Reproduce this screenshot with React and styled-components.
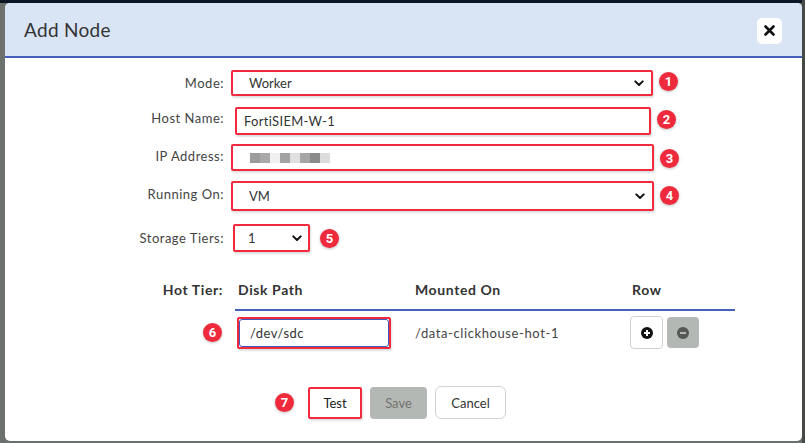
import React from "react";
import styled, { createGlobalStyle } from "styled-components";

const GlobalStyle = createGlobalStyle`
  *, *::before, *::after { box-sizing: border-box; }
  html, body { margin: 0; padding: 0; }
  body { font-family: Lato, "Open Sans", "Liberation Sans", sans-serif; background: #6d716d; }
`;

const Backdrop = styled.div`
  width: 805px;
  height: 443px;
  padding: 3px 3px 2px 5px;
  background:
    linear-gradient(to right, transparent 802px, #464a46 802px),
    linear-gradient(to bottom, #0c1626 0 3px, #6d716d 3px);
`;

const Modal = styled.div`
  width: 797px;
  height: 438px;
  background: #fff;
  border-radius: 5px;
  overflow: hidden;
  display: flex;
  flex-direction: column;
`;

const Header = styled.div`
  height: 55px;
  flex-shrink: 0;
  background: #d9e4f4;
  border-bottom: 2px solid #4561bd;
  display: flex;
  align-items: center;
  justify-content: space-between;
  padding: 0 20px 0 19px;
`;

const Title = styled.h2`
  margin: 0;
  font-size: 19px;
  font-weight: 400;
  color: #333;
  letter-spacing: 0.3px;
`;

const CloseBtn = styled.button`
  width: 25px;
  height: 26px;
  border: none;
  border-radius: 5px;
  background: #fff;
  display: flex;
  align-items: center;
  justify-content: center;
  padding: 0;
  margin-top: 2px;
`;

const Body = styled.div`
  padding-top: 12px;
  display: flex;
  flex-direction: column;
`;

const FieldRow = styled.div`
  display: flex;
  align-items: center;
  margin-top: ${(p) => p.$mt || 0}px;
`;

const Label = styled.label`
  width: 219px;
  flex-shrink: 0;
  text-align: right;
  font-size: 13px;
  letter-spacing: 0.5px;
  color: #444;
  margin-top: ${(p) => p.$dy || 0}px;
`;

const Annot = styled.div`
  margin-left: ${(p) => p.$ml}px;
  width: ${(p) => p.$w}px;
  height: ${(p) => p.$h}px;
  flex-shrink: 0;
  border: 2px solid #f22a3d;
  border-radius: 2px;
  background: #fff;
  box-shadow: 1px 2px 2px rgba(0, 0, 0, 0.13);
  display: flex;
  align-items: center;
`;

const Select = styled.select`
  appearance: none;
  -webkit-appearance: none;
  border: none;
  outline: none;
  background: transparent;
  flex: 1;
  min-width: 0;
  height: 100%;
  padding: 0 0 0 ${(p) => p.$pl}px;
  font-family: inherit;
  font-size: 13px;
  color: #333;
`;

const TextInput = styled.input`
  border: none;
  outline: none;
  background: transparent;
  flex: 1;
  min-width: 0;
  height: 100%;
  padding: 0 0 0 ${(p) => p.$pl}px;
  font-family: inherit;
  font-size: 13px;
  letter-spacing: 0.3px;
  color: #333;
`;

const FocusInput = styled.input`
  width: 100%;
  height: 100%;
  border: 1px solid #3d5bb8;
  border-radius: 3px;
  outline: none;
  padding: 0 0 0 10px;
  font-family: inherit;
  font-size: 13px;
  letter-spacing: 0.5px;
  color: #333;
`;

const Chevron = styled.svg`
  flex-shrink: 0;
  margin-right: ${(p) => p.$mr}px;
`;

const Badge = styled.span`
  width: 19px;
  height: 19px;
  border-radius: 50%;
  background: #ee2a3c;
  color: #fff;
  font-family: Roboto, "Liberation Sans", sans-serif;
  font-weight: 700;
  font-size: 13px;
  display: inline-flex;
  align-items: center;
  justify-content: center;
  flex-shrink: 0;
  box-shadow: 0 1px 3px rgba(0, 0, 0, 0.25);
  margin-left: ${(p) => p.$ml || 0}px;
  margin-right: ${(p) => p.$mr || 0}px;
  margin-top: ${(p) => (p.$dy > 0 ? p.$dy * 2 : 0)}px;
  margin-bottom: ${(p) => (p.$dy < 0 ? -p.$dy * 2 : 0)}px;
`;

const Blur = styled.div`
  display: flex;
  margin-left: 17px;
  height: 10px;
`;

const Pix = styled.span`
  width: 10px;
  height: 10px;
  background: ${(p) => p.$c};
`;

const Tier = styled.div`
  display: grid;
  grid-template-columns: 230px 177px 217px 106px;
  margin-top: 28px;
`;

const TierLabel = styled.div`
  text-align: right;
  padding-right: 12px;
  font-size: 14px;
  font-weight: 700;
  letter-spacing: 0.6px;
  color: #333;
  line-height: 20px;
`;

const BadgeCell = styled.div`
  display: flex;
  justify-content: flex-end;
  align-items: center;
  padding-right: 12px;
`;

const Th = styled.div`
  font-size: 14px;
  font-weight: 700;
  letter-spacing: 0.6px;
  color: #333;
  line-height: 20px;
  padding: 0 3px 9px;
  border-bottom: 2px solid #4561bd;
`;

const Td = styled.div`
  display: flex;
  align-items: center;
  gap: 4px;
  padding: 5px 0 5px ${(p) => p.$pl || 0}px;
  font-size: 13px;
  letter-spacing: 0.6px;
  color: #444;
`;

const IconBtn = styled.button`
  width: ${(p) => (p.$disabled ? 32 : 33)}px;
  height: ${(p) => (p.$disabled ? 31 : 33)}px;
  border-radius: 4px;
  border: ${(p) => (p.$disabled ? "none" : "1px solid #cfd2cf")};
  background: ${(p) => (p.$disabled ? "#b4b8b4" : "#fff")};
  display: flex;
  align-items: center;
  justify-content: center;
  padding: 0;
`;

const Footer = styled.div`
  display: flex;
  align-items: center;
  margin-top: 32px;
  padding-left: 270px;
`;

const Button = styled.button`
  height: ${(p) => p.$h}px;
  width: ${(p) => p.$w}px;
  margin-left: ${(p) => p.$ml || 0}px;
  border-radius: ${(p) => p.$r || 4}px;
  border: ${(p) => p.$border};
  background: ${(p) => p.$bg};
  color: ${(p) => p.$fg};
  font-family: inherit;
  font-size: 13px;
  padding: 0;
  box-shadow: ${(p) => (p.$shadow ? "1px 2px 2px rgba(0,0,0,0.12)" : "none")};
`;

const ChevronIcon = ({ mr }) => (
  <Chevron $mr={mr} width="10" height="7" viewBox="0 0 10 7">
    <path d="M1.3 1.4 L5 5 L8.7 1.4" fill="none" stroke="#111" strokeWidth="2" strokeLinecap="round" strokeLinejoin="round" />
  </Chevron>
);

const blurColors = ["#9b9b9b", "#a9a9a9", "#f0f0f0", "#a3a3a3", "#e0e0e0", "#a6a6a6", "#8a8a8a", "#dcdcdc"];

export default function App() {
  return (
    <>
      <GlobalStyle />
      <Backdrop>
        <Modal>
          <Header>
            <Title>Add Node</Title>
            <CloseBtn aria-label="Close">
              <svg width="11" height="11" viewBox="0 0 11 11">
                <path d="M1.5 1.5 L9.5 9.5 M9.5 1.5 L1.5 9.5" stroke="#111" strokeWidth="2.6" strokeLinecap="round" />
              </svg>
            </CloseBtn>
          </Header>
          <Body>
            <FieldRow>
              <Label $dy={-1}>Mode:</Label>
              <Annot $ml={7} $w={422} $h={26}>
                <Select $pl={16} defaultValue="Worker">
                  <option>Worker</option>
                  <option>Collector</option>
                </Select>
                <ChevronIcon mr={7} />
              </Annot>
              <Badge $ml={6} $dy={-2}>1</Badge>
            </FieldRow>
            <FieldRow $mt={11}>
              <Label $dy={-6}>Host Name:</Label>
              <Annot $ml={11} $w={416} $h={28}>
                <TextInput $pl={7} defaultValue="FortiSIEM-W-1" />
              </Annot>
              <Badge $ml={6} $dy={-2}>2</Badge>
            </FieldRow>
            <FieldRow $mt={9}>
              <Label $dy={-4}>IP Address:</Label>
              <Annot $ml={7} $w={423} $h={27}>
                <Blur>
                  {blurColors.map((c, i) => (
                    <Pix key={i} $c={c} />
                  ))}
                </Blur>
              </Annot>
              <Badge $ml={6} $dy={1}>3</Badge>
            </FieldRow>
            <FieldRow $mt={10}>
              <Label $dy={-4}>Running On:</Label>
              <Annot $ml={7} $w={423} $h={30}>
                <Select $pl={16} defaultValue="VM">
                  <option>VM</option>
                  <option>Bare Metal</option>
                </Select>
                <ChevronIcon mr={7} />
              </Annot>
              <Badge $ml={6} $dy={-1}>4</Badge>
            </FieldRow>
            <FieldRow $mt={13}>
              <Label $dy={-1}>Storage Tiers:</Label>
              <Annot $ml={9} $w={77} $h={28}>
                <Select $pl={13} defaultValue="1">
                  <option>1</option>
                  <option>2</option>
                </Select>
                <ChevronIcon mr={6} />
              </Annot>
              <Badge $ml={10}>5</Badge>
            </FieldRow>

            <Tier>
              <TierLabel>Hot Tier:</TierLabel>
              <Th>Disk Path</Th>
              <Th>Mounted On</Th>
              <Th>Row</Th>
              <BadgeCell>
                <Badge $mr={1}>6</Badge>
              </BadgeCell>
              <Td $pl={2}>
                <Annot $ml={0} $w={154} $h={32}>
                  <FocusInput defaultValue="/dev/sdc" />
                </Annot>
              </Td>
              <Td $pl={3}>/data-clickhouse-hot-1</Td>
              <Td $pl={1}>
                <IconBtn aria-label="Add row">
                  <svg width="12" height="12" viewBox="0 0 12 12">
                    <circle cx="6" cy="6" r="6" fill="#111" />
                    <path d="M6 3 V9 M3 6 H9" stroke="#fff" strokeWidth="2" />
                  </svg>
                </IconBtn>
                <IconBtn $disabled aria-label="Remove row">
                  <svg width="12" height="12" viewBox="0 0 12 12">
                    <circle cx="6" cy="6" r="6" fill="#555855" />
                    <path d="M3 6 H9" stroke="#b4b8b4" strokeWidth="2" />
                  </svg>
                </IconBtn>
              </Td>
            </Tier>

            <Footer>
              <Badge>7</Badge>
              <Button $ml={14} $w={54} $h={32} $r={2} $border="2px solid #f22a3d" $bg="#fff" $fg="#222" $shadow>
                Test
              </Button>
              <Button $ml={8} $w={57} $h={32} $border="none" $bg="#b4b8b4" $fg="#707370">
                Save
              </Button>
              <Button $ml={8} $w={71} $h={33} $r={6} $border="1px solid #cfd2cf" $bg="#fff" $fg="#333">
                Cancel
              </Button>
            </Footer>
          </Body>
        </Modal>
      </Backdrop>
    </>
  );
}
